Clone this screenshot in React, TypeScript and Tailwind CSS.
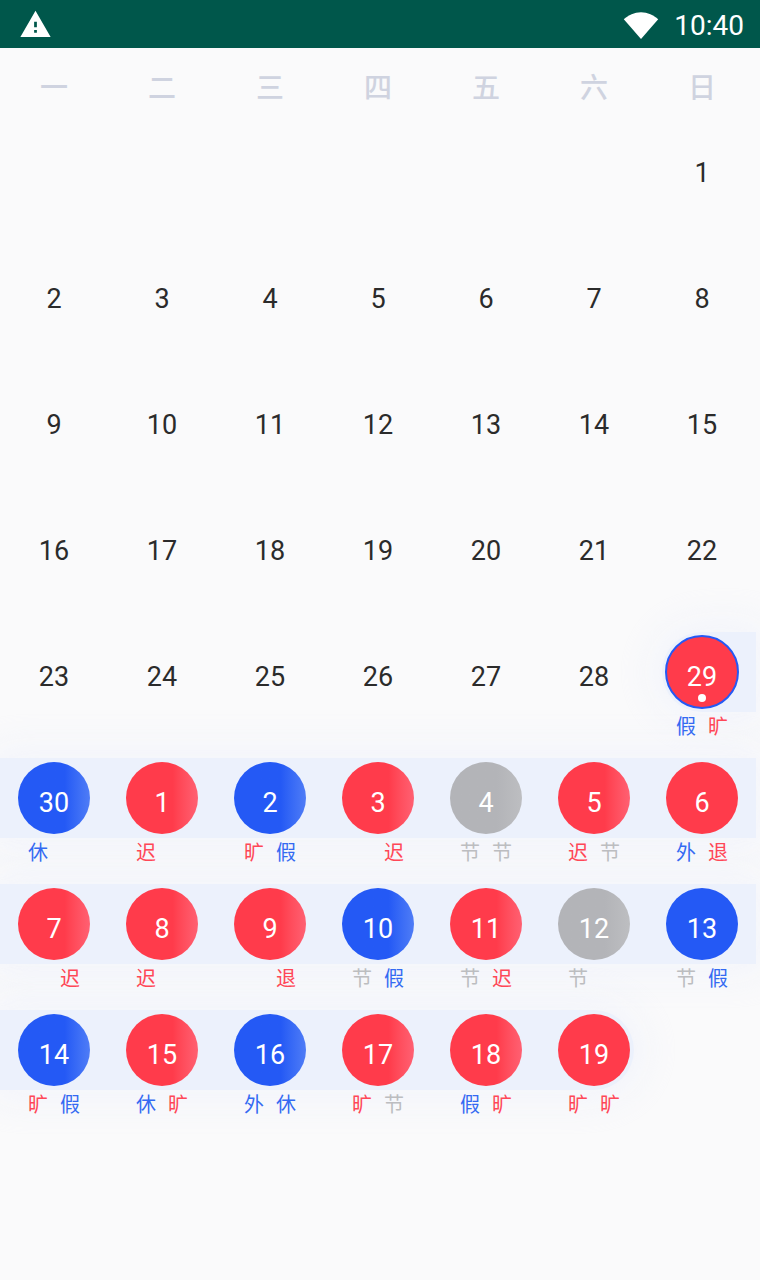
const weekdays = ["一", "二", "三", "四", "五", "六", "日"];

type Tone = "red" | "blue" | "gray";
type Day = { n: number; tone?: Tone; left?: string; right?: string; today?: boolean; flat?: boolean };

const plainRows: number[][] = [
  [1],
  [2, 3, 4, 5, 6, 7, 8],
  [9, 10, 11, 12, 13, 14, 15],
  [16, 17, 18, 19, 20, 21, 22],
];

const rows: Day[][] = [
  [
    { n: 23 },
    { n: 24 },
    { n: 25 },
    { n: 26 },
    { n: 27 },
    { n: 28 },
    { n: 29, tone: "red", left: "假", right: "旷", today: true, flat: true },
  ],
  [
    { n: 30, tone: "blue", left: "休" },
    { n: 1, tone: "red", left: "迟" },
    { n: 2, tone: "blue", left: "旷", right: "假" },
    { n: 3, tone: "red", right: "迟" },
    { n: 4, tone: "gray", left: "节", right: "节" },
    { n: 5, tone: "red", left: "迟", right: "节" },
    { n: 6, tone: "red", left: "外", right: "退", flat: true },
  ],
  [
    { n: 7, tone: "red", right: "迟" },
    { n: 8, tone: "red", left: "迟" },
    { n: 9, tone: "red", right: "退" },
    { n: 10, tone: "blue", left: "节", right: "假" },
    { n: 11, tone: "red", left: "节", right: "迟" },
    { n: 12, tone: "gray", left: "节" },
    { n: 13, tone: "blue", left: "节", right: "假", flat: true },
  ],
  [
    { n: 14, tone: "blue", left: "旷", right: "假" },
    { n: 15, tone: "red", left: "休", right: "旷" },
    { n: 16, tone: "blue", left: "外", right: "休" },
    { n: 17, tone: "red", left: "旷", right: "节" },
    { n: 18, tone: "red", left: "假", right: "旷" },
    { n: 19, tone: "red", left: "旷", right: "旷", flat: true },
  ],
];

const bands = [
  "col-start-7 col-span-1 ml-[14px] rounded-l-[40px]",
  "col-start-1 col-span-7",
  "col-start-1 col-span-7",
  "col-start-1 col-span-6 mr-[14px] rounded-r-[40px]",
];

function labelColor(label?: string) {
  if (label === "节") return "text-[#bcbdc0]";
  if (label === "休" || label === "假" || label === "外") return "text-[#346af2]";
  return "text-[#ff4757]";
}

function circleColor(day: Day) {
  if (day.tone === "blue") {
    return day.flat
      ? "bg-[#2459f5]"
      : "bg-gradient-to-r from-[#2459f5] from-[65%] to-[#4f7cf6]";
  }
  if (day.tone === "gray") {
    return "bg-gradient-to-r from-[#b3b4b8] from-[65%] to-[#bdbec1]";
  }
  return day.flat
    ? "bg-[#ff3b4b]"
    : "bg-gradient-to-r from-[#ff3b4b] from-[65%] to-[#ff6072]";
}

function PlainDay({ n }: { n: number }) {
  return (
    <div className="flex h-20 w-[108px] items-center justify-center">
      <span className="mt-[10px] text-[27px] leading-none text-[#2b2b2b]">{n}</span>
    </div>
  );
}

function MarkedDay({ day }: { day: Day }) {
  return (
    <div className="flex h-[126px] flex-col items-center">
      <div className="flex h-20 items-center justify-center">
        <div
          className={`relative flex h-[72px] w-[72px] items-center justify-center rounded-full ${circleColor(day)} ${
            day.today ? "border-2 border-[#2459f5] h-[74px] w-[74px]" : ""
          }`}
        >
          <span className="mt-[10px] text-[27px] leading-none text-white">{day.n}</span>
          {day.today && (
            <span className="absolute bottom-[5px] h-2 w-2 rounded-full bg-white" />
          )}
        </div>
      </div>
      <div className="mt-[5px] flex h-5 gap-3 text-[20px] leading-5">
        <span className={`w-5 ${labelColor(day.left)}`}>{day.left}</span>
        <span className={`w-5 ${labelColor(day.right)}`}>{day.right}</span>
      </div>
    </div>
  );
}

export default function App() {
  return (
    <div className="h-[1280px] w-[760px] overflow-hidden bg-[#fafafb] font-['Roboto','Noto_Sans_CJK_SC',sans-serif]">
      <header className="flex h-12 items-center justify-between bg-[#00574b] pl-[19px] pr-4 text-white">
        <svg viewBox="0 0 24 24" className="h-[33px] w-[33px] fill-white">
          <path d="M1 21h22L12 2 1 21zm12-3h-2v-2h2v2zm0-4h-2v-4h2v4z" />
        </svg>
        <div className="flex items-center gap-[15px]">
          <svg viewBox="0 0 36 30" className="mt-px h-[30px] w-9 fill-white">
            <path d="M18 29 0.8 9.2C5.4 5.2 11.4 2.2 18 2.2s12.6 3 17.2 7z" />
          </svg>
          <span className="mt-1 text-[28px] leading-none">10:40</span>
        </div>
      </header>

      <div className="grid h-20 w-[756px] grid-cols-7">
        {weekdays.map((w) => (
          <div key={w} className="flex items-center justify-center pt-0.5 text-[28px] font-medium leading-none text-[#cfd3e0]">
            {w}
          </div>
        ))}
      </div>

      <div className="w-[756px]">
        {plainRows.map((row, i) => (
          <div key={i} className="grid h-[126px] grid-cols-7">
            {row.length === 1 && <div className="col-span-6" />}
            {row.map((n) => (
              <PlainDay key={n} n={n} />
            ))}
          </div>
        ))}

        {rows.map((row, i) => (
          <div key={i} className="grid h-[126px] grid-cols-7">
            <div
              className={`row-start-1 h-20 bg-[#ecf1fc] shadow-[0_0_40px_10px_rgba(236,241,252,0.55)] ${bands[i]}`}
            />
            {row.map((day, j) =>
              day.tone ? (
                <div key={j} className="z-10 row-start-1" style={{ gridColumnStart: j + 1 }}>
                  <MarkedDay day={day} />
                </div>
              ) : (
                <div key={j} className="z-10 row-start-1" style={{ gridColumnStart: j + 1 }}>
                  <PlainDay n={day.n} />
                </div>
              ),
            )}
          </div>
        ))}
      </div>
    </div>
  );
}
